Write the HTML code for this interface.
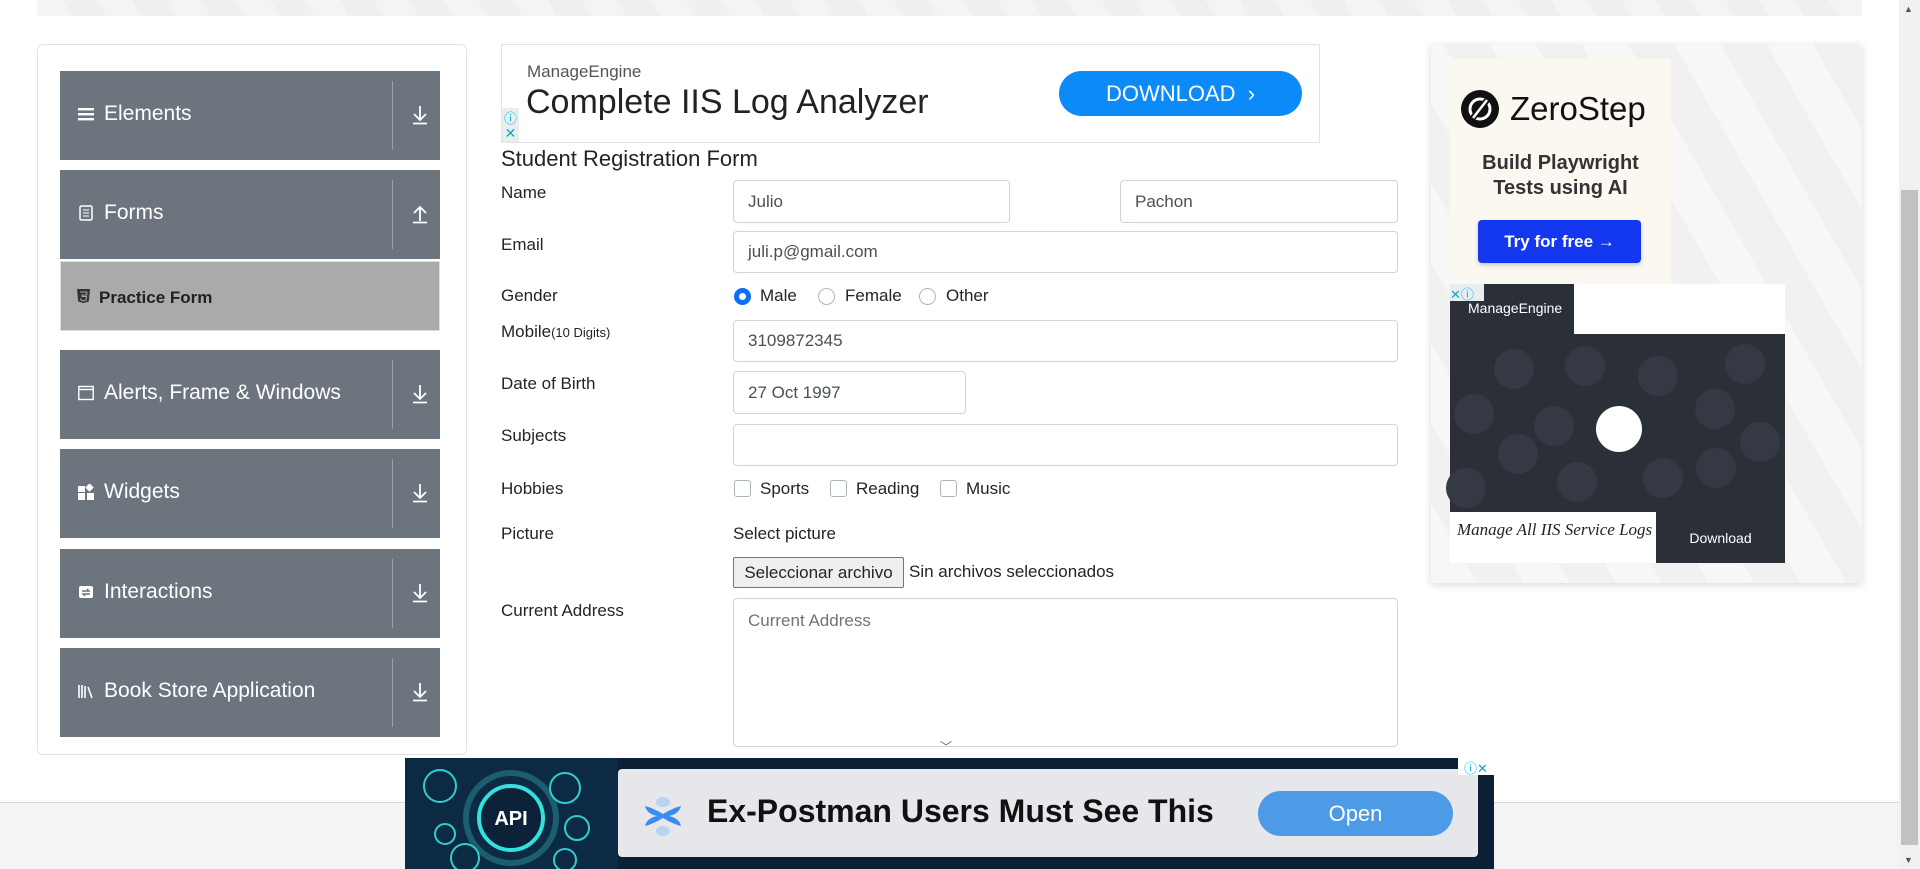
<!DOCTYPE html>
<html><head><meta charset="utf-8"><style>
*{box-sizing:border-box;margin:0;padding:0}
body{width:1920px;height:869px;overflow:hidden;background:#fff;font-family:"Liberation Sans",sans-serif;position:relative;color:#212529}
.a{position:absolute}
.strip{left:37px;top:0;width:1825px;height:16px;background:repeating-linear-gradient(60deg,#f4f4f4 0 30px,#efefef 30px 60px)}
.sb{left:1899px;top:0;width:21px;height:869px;background:#f1f1f1}
.thumb{left:1901px;top:190px;width:17px;height:655px;background:#c1c1c1}
.foot{left:0;top:802px;width:1899px;height:67px;background:#f4f4f4;border-top:1px solid #d8d8d8}
.card{left:37px;top:44px;width:430px;height:711px;border:1px solid #dee2e6;border-radius:6px;background:#fff}
.grp{left:60px;width:380px;height:89px;background:#6c747d;color:#fff;font-size:21px}
.grp .t{position:absolute;left:44px;top:31px}
.grp .ic{position:absolute;left:18px;top:35px;width:16px;height:16px}
.grp .dv{position:absolute;left:332px;top:10px;width:1px;height:69px;background:#9aa0a6}
.grp .ar{position:absolute;left:351px;top:34px}
.pf{left:60px;top:261px;width:380px;height:70px;background:#aaa;border:1px solid #ddd;font-weight:bold;font-size:17px;color:#222}
.lbl{left:501px;font-size:17px;color:#212529}
.inp{border:1px solid #ced4da;border-radius:4px;background:#fff;font-size:17px;color:#495057;padding-left:14px;display:flex;align-items:center}
.rad{width:17px;height:17px;border:1px solid #adb5bd;border-radius:50%;background:#fff}
.chk{width:17px;height:17px;border:1px solid #adb5bd;border-radius:3px;background:#fff}
.ot{font-size:17px;color:#212529}
.dc{position:absolute;width:40px;height:40px;border-radius:50%;background:#343943}
</style></head><body>
<div class="a strip"></div>
<div class="a foot"></div>
<div class="a sb"></div><div class="a thumb"></div>
<div class="a" style="left:1904px;top:4px;font-size:9px;color:#555">▲</div>
<div class="a" style="left:1904px;top:855px;font-size:9px;color:#555">▼</div>

<svg width="0" height="0" style="position:absolute"><defs>
<symbol id="dn" viewBox="0 0 18 20"><path d="M9 1v14M3 9l6 6 6-6M2 18.5h14" stroke="#fff" stroke-width="1.8" fill="none"/></symbol>
<symbol id="up" viewBox="0 0 18 20"><path d="M9 17V3M3 9l6-6 6 6M2 18.5h14" stroke="#fff" stroke-width="1.8" fill="none"/></symbol>
</defs></svg>

<div class="a card"></div>
<div class="a grp" style="top:71px"><svg class="ic" viewBox="0 0 16 16"><rect y="2" width="16" height="2.4" fill="#fff"/><rect y="7" width="16" height="2.4" fill="#fff"/><rect y="12" width="16" height="2.4" fill="#fff"/></svg><span class="t">Elements</span><span class="dv"></span><svg class="ar" width="18" height="20"><use href="#dn"/></svg></div>
<div class="a grp" style="top:170px"><svg class="ic" viewBox="0 0 16 16"><rect x="2" y="1" width="12" height="14" rx="1.5" fill="none" stroke="#fff" stroke-width="1.5"/><path d="M5 5h6M5 8h6M5 11h6" stroke="#fff"/></svg><span class="t">Forms</span><span class="dv"></span><svg class="ar" width="18" height="20"><use href="#up"/></svg></div>
<div class="a pf"><svg style="position:absolute;left:16px;top:27px" width="13" height="14" viewBox="0 0 13 14"><path d="M0 0h13l-1.2 12.5L6.5 14 1.2 12.5z" fill="#333"/><path d="M3 3h7l-.3 3H5l.2 1.5h4.3l-.4 3.5-2.6.8-2.6-.8-.2-1.8" fill="none" stroke="#aaa" stroke-width="1"/></svg><span style="position:absolute;left:38px;top:26px">Practice Form</span></div>
<div class="a grp" style="top:350px"><svg class="ic" viewBox="0 0 16 16"><rect x="0.8" y="1.5" width="14.4" height="13" fill="none" stroke="#fff" stroke-width="1.4"/><path d="M1 4.5h14" stroke="#fff" stroke-width="1.4"/></svg><span class="t">Alerts, Frame &amp; Windows</span><span class="dv"></span><svg class="ar" width="18" height="20"><use href="#dn"/></svg></div>
<div class="a grp" style="top:449px"><svg class="ic" viewBox="0 0 16 16"><rect x="0" y="2" width="7" height="6" fill="#fff"/><rect x="8.5" y="0.5" width="6" height="6" fill="#fff" transform="rotate(45 11.5 3.5)"/><rect x="0" y="9" width="7" height="7" fill="#fff"/><rect x="9" y="9" width="7" height="7" fill="#fff"/></svg><span class="t">Widgets</span><span class="dv"></span><svg class="ar" width="18" height="20"><use href="#dn"/></svg></div>
<div class="a grp" style="top:549px"><svg class="ic" viewBox="0 0 16 16"><rect x="1" y="2" width="14" height="12" rx="2" fill="#fff"/><path d="M4 7h7l-2-2M12 10H5l2 2" stroke="#6c747d" stroke-width="1.4" fill="none"/></svg><span class="t">Interactions</span><span class="dv"></span><svg class="ar" width="18" height="20"><use href="#dn"/></svg></div>
<div class="a grp" style="top:648px"><svg class="ic" viewBox="0 0 16 16"><path d="M1 2v13M4 2v13M7 3v12M10 4l4 11" stroke="#fff" stroke-width="1.6"/></svg><span class="t">Book Store Application</span><span class="dv"></span><svg class="ar" width="18" height="20"><use href="#dn"/></svg></div>

<!-- top ad -->
<div class="a" style="left:501px;top:44px;width:819px;height:99px;border:1px solid #e3e3e3;background:#fff"></div>
<div class="a" style="left:527px;top:62px;font-size:17px;color:#555">ManageEngine</div>
<div class="a" style="left:526px;top:83px;font-size:34px;color:#222">Complete IIS Log Analyzer</div>
<div class="a" style="left:1059px;top:71px;width:243px;height:45px;border-radius:23px;background:#0c8af7;color:#fff;font-size:22px;display:flex;align-items:center;justify-content:center">DOWNLOAD&nbsp;&nbsp;›</div>
<div class="a" style="left:502px;top:108px;width:17px;height:17px;background:#e8eef0;color:#00aecd;font-size:13px;text-align:center">ⓘ</div>
<div class="a" style="left:502px;top:125px;width:17px;height:17px;background:#e8eef0;color:#00aecd;font-size:14px;text-align:center">✕</div>

<div class="a" style="left:501px;top:146px;font-size:22px;font-weight:500;color:#212529">Student Registration Form</div>
<div class="a lbl" style="top:183px">Name</div>
<div class="a lbl" style="top:235px">Email</div>
<div class="a lbl" style="top:286px">Gender</div>
<div class="a lbl" style="top:322px">Mobile<span style="font-size:13px">(10 Digits)</span></div>
<div class="a lbl" style="top:374px">Date of Birth</div>
<div class="a lbl" style="top:426px">Subjects</div>
<div class="a lbl" style="top:479px">Hobbies</div>
<div class="a lbl" style="top:524px">Picture</div>
<div class="a lbl" style="top:601px">Current Address</div>

<div class="a inp" style="left:733px;top:180px;width:277px;height:43px">Julio</div>
<div class="a inp" style="left:1120px;top:180px;width:278px;height:43px">Pachon</div>
<div class="a inp" style="left:733px;top:231px;width:665px;height:42px">juli.p@gmail.com</div>
<div class="a rad" style="left:734px;top:288px;border:5px solid #0d6efd"></div><div class="a ot" style="left:760px;top:286px">Male</div>
<div class="a rad" style="left:818px;top:288px"></div><div class="a ot" style="left:845px;top:286px">Female</div>
<div class="a rad" style="left:919px;top:288px"></div><div class="a ot" style="left:946px;top:286px">Other</div>
<div class="a inp" style="left:733px;top:320px;width:665px;height:42px">3109872345</div>
<div class="a inp" style="left:733px;top:371px;width:233px;height:43px">27 Oct 1997</div>
<div class="a inp" style="left:733px;top:424px;width:665px;height:42px"></div>
<div class="a chk" style="left:734px;top:480px"></div><div class="a ot" style="left:760px;top:479px">Sports</div>
<div class="a chk" style="left:830px;top:480px"></div><div class="a ot" style="left:856px;top:479px">Reading</div>
<div class="a chk" style="left:940px;top:480px"></div><div class="a ot" style="left:966px;top:479px">Music</div>
<div class="a ot" style="left:733px;top:524px">Select picture</div>
<div class="a" style="left:733px;top:557px;width:171px;height:31px;border:1px solid #767676;border-radius:2px;background:#efefef;font-size:17px;display:flex;align-items:center;justify-content:center">Seleccionar archivo</div>
<div class="a ot" style="left:909px;top:562px">Sin archivos seleccionados</div>
<div class="a inp" style="left:733px;top:598px;width:665px;height:149px;align-items:flex-start;padding-top:12px;color:#6c757d">Current Address</div>
<div class="a" style="left:940px;top:738px;font-size:12px;color:#666">﹀</div>

<!-- right ad -->
<div class="a" style="left:1431px;top:44px;width:431px;height:539px;background:repeating-linear-gradient(60deg,#f7f7f7 0 40px,#f1f1f1 40px 80px);box-shadow:0 2px 8px rgba(0,0,0,.15)"></div>
<div class="a" style="left:1450px;top:59px;width:221px;height:225px;background:#fbf7f1"></div>
<svg class="a" style="left:1460px;top:89px" width="40" height="40" viewBox="0 0 40 40"><circle cx="20" cy="20" r="19" fill="#111"/><circle cx="20" cy="20" r="10" fill="none" stroke="#fff" stroke-width="3"/><path d="M12 30L28 10" stroke="#111" stroke-width="6"/><path d="M13 29L27 11" stroke="#fff" stroke-width="2.5"/></svg>
<div class="a" style="left:1510px;top:90px;font-size:33px;font-weight:500;color:#111">ZeroStep</div>
<div class="a" style="left:1450px;top:151px;width:221px;text-align:center;font-size:20px;font-weight:bold;color:#333;line-height:25px">Build Playwright<br>Tests using AI</div>
<div class="a" style="left:1478px;top:220px;width:163px;height:43px;background:#1438f0;border-radius:4px;color:#fff;font-weight:bold;font-size:17px;display:flex;align-items:center;justify-content:center;box-shadow:0 2px 4px rgba(0,0,0,.2)">Try for free →</div>
<div class="a" style="left:1450px;top:284px;width:335px;height:279px;background:#fff"></div>
<div class="a" style="left:1450px;top:284px;width:124px;height:52px;background:#2b2f38;color:#fff;font-size:14px;padding:16px 0 0 18px">ManageEngine</div>
<div class="a" style="left:1450px;top:284px;width:34px;height:17px;background:#e8eef0;color:#00aecd;font-size:13px">✕ⓘ</div>
<div class="a" style="left:1450px;top:334px;width:335px;height:178px;background:#2b2f38">
<div class="dc" style="left:44px;top:15px"></div><div class="dc" style="left:115px;top:12px"></div><div class="dc" style="left:188px;top:22px"></div><div class="dc" style="left:275px;top:10px"></div>
<div class="dc" style="left:4px;top:60px"></div><div class="dc" style="left:84px;top:72px"></div><div class="dc" style="left:245px;top:55px"></div><div class="dc" style="left:290px;top:88px"></div>
<div class="dc" style="left:48px;top:100px"></div><div class="dc" style="left:107px;top:128px"></div><div class="dc" style="left:193px;top:124px"></div><div class="dc" style="left:246px;top:114px"></div><div class="dc" style="left:-4px;top:134px"></div>
</div>
<div class="a" style="left:1596px;top:406px;width:46px;height:46px;border-radius:50%;background:#fff"></div>
<div class="a" style="left:1450px;top:520px;width:206px;font-family:'Liberation Serif',serif;font-style:italic;font-size:17px;color:#222;padding-left:7px">Manage All IIS Service Logs</div>
<div class="a" style="left:1656px;top:512px;width:129px;height:51px;background:#2b2f38;color:#fff;font-size:14px;display:flex;align-items:center;justify-content:center">Download</div>

<!-- bottom ad -->
<div class="a" style="left:405px;top:758px;width:1089px;height:111px;background:#0b2035"></div>
<svg class="a" style="left:405px;top:758px" width="213" height="111" viewBox="0 0 213 111"><rect width="213" height="111" fill="#0d2a44"/><circle cx="106" cy="60" r="45" fill="none" stroke="#1c5e70" stroke-width="6"/><circle cx="106" cy="60" r="32" fill="#0c2238" stroke="#33e0e0" stroke-width="4"/><text x="106" y="67" fill="#fff" font-size="20" font-weight="bold" text-anchor="middle" font-family="Liberation Sans">API</text><circle cx="35" cy="28" r="16" fill="none" stroke="#3cc" stroke-width="2"/><circle cx="160" cy="30" r="15" fill="none" stroke="#3cc" stroke-width="2"/><circle cx="40" cy="76" r="10" fill="none" stroke="#3cc" stroke-width="2"/><circle cx="60" cy="100" r="14" fill="none" stroke="#3cc" stroke-width="2"/><circle cx="172" cy="70" r="12" fill="none" stroke="#3cc" stroke-width="2"/><circle cx="160" cy="102" r="11" fill="none" stroke="#3cc" stroke-width="2"/></svg>
<div class="a" style="left:618px;top:769px;width:860px;height:88px;background:#e5e7eb;border-radius:4px"></div>
<svg class="a" style="left:641px;top:794px" width="44" height="44" viewBox="0 0 44 44"><path d="M4 12q8 2 18 8q10-6 18-8q-2 8-12 10q10 2 12 10q-8-2-18-8q-10 6-18 8q2-8 12-10q-10-2-12-10z" fill="#3b8cf0"/><ellipse cx="22" cy="8" rx="7" ry="5" fill="#b9d4f3"/><ellipse cx="22" cy="37" rx="7" ry="5" fill="#b9d4f3"/></svg>
<div class="a" style="left:707px;top:793px;font-size:32px;font-weight:bold;color:#111">Ex-Postman Users Must See This</div>
<div class="a" style="left:1258px;top:791px;width:195px;height:45px;border-radius:23px;background:#4d9be6;color:#fff;font-size:22px;display:flex;align-items:center;justify-content:center">Open</div>
<div class="a" style="left:1458px;top:758px;width:36px;height:17px;background:#fff;color:#00aecd;font-size:13px;text-align:center">ⓘ✕</div>
</body></html>
